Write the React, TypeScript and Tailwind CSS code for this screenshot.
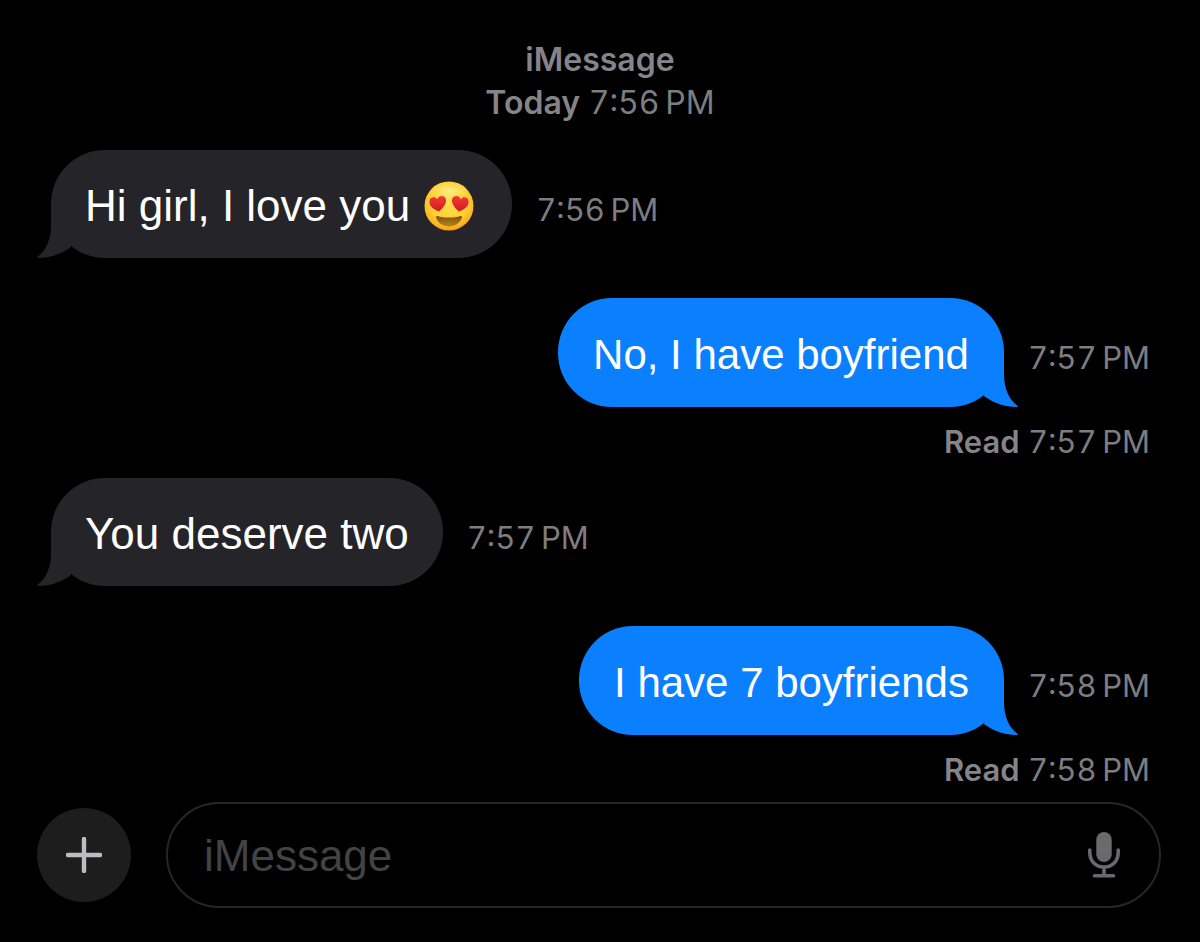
import React from "react";

type Side = "received" | "sent";

interface Message {
  side: Side;
  text: string;
  time: string;
  emoji?: boolean;
  read?: boolean;
}

const messages: Message[] = [
  { side: "received", text: "Hi girl, I love you", time: "7:56\u2009PM", emoji: true },
  { side: "sent", text: "No, I have boyfriend", time: "7:57\u2009PM", read: true },
  { side: "received", text: "You deserve two", time: "7:57\u2009PM" },
  { side: "sent", text: "I have 7 boyfriends", time: "7:58\u2009PM", read: true },
];

function HeartEyes() {
  return (
    <svg
      viewBox="0 0 50 50"
      role="img"
      aria-label="Smiling face with heart eyes"
      className="mr-1 ml-3.5 size-[50px] shrink-0"
    >
      <defs>
        <radialGradient id="face" cx="0.5" cy="0.4" r="0.64">
          <stop offset="0" stopColor="#ffe052" />
          <stop offset="0.6" stopColor="#ffd038" />
          <stop offset="0.85" stopColor="#fdb320" />
          <stop offset="1" stopColor="#ec8a12" />
        </radialGradient>
        <radialGradient id="shine" cx="0.5" cy="0.5" r="0.5">
          <stop offset="0" stopColor="#fff59a" stopOpacity="0.75" />
          <stop offset="1" stopColor="#fff08a" stopOpacity="0" />
        </radialGradient>
        <linearGradient id="heart" x1="0" y1="0" x2="0" y2="1">
          <stop offset="0" stopColor="#f23a38" />
          <stop offset="1" stopColor="#d31a20" />
        </linearGradient>
        <linearGradient id="mouth" x1="0" y1="0" x2="0" y2="1">
          <stop offset="0" stopColor="#80520f" />
          <stop offset="1" stopColor="#b8841c" />
        </linearGradient>
      </defs>
      <circle cx="25" cy="25" r="24.5" fill="url(#face)" />
      <ellipse cx="25" cy="10" rx="20" ry="9" fill="url(#shine)" />
      <path
        d="M15.2 30.4C9.5 28.4 5.2 25 5.4 20.4C5.6 16 11 14.8 13.2 18.3C14.4 14 20.6 13.6 21.9 18C23 22.4 19 27 15.2 30.4Z"
        fill="url(#heart)"
      />
      <path
        d="M34.8 30.4C40.5 28.4 44.8 25 44.6 20.4C44.4 16 39 14.8 36.8 18.3C35.6 14 29.4 13.6 28.1 18C27 22.4 31 27 34.8 30.4Z"
        fill="url(#heart)"
      />
      <path
        d="M13.6 35C16.8 36 20.6 36.5 25 36.5C29.4 36.5 33.2 36 36.4 35C37.8 34.6 38.3 35.5 37.9 36.7C36.3 41.9 31.3 45.4 25 45.4C18.7 45.4 13.7 41.9 12.1 36.7C11.7 35.5 12.2 34.6 13.6 35Z"
        fill="url(#mouth)"
      />
    </svg>
  );
}

function Tail({ side }: { side: Side }) {
  return (
    <svg
      viewBox="0 0 50 60"
      aria-hidden="true"
      className={
        side === "sent"
          ? "absolute bottom-0 -right-3.5 h-[60px] w-[50px] -scale-x-100 text-[#0a80ff]"
          : "absolute bottom-0 -left-3.5 h-[60px] w-[50px] text-[#252429]"
      }
    >
      <path
        d="M14 5V27C14 41 9.5 52 0.6 58.7C-0.2 59.4 0 60 1 60C13 60 24 56 33.5 49.5L40 30V5Z"
        fill="currentColor"
      />
    </svg>
  );
}

function Bubble({ message }: { message: Message }) {
  const sent = message.side === "sent";
  return (
    <li
      className={
        sent ? "mt-10 mb-4 flex flex-col items-end last:mb-3" : "flex flex-col items-start"
      }
    >
      <div className="flex items-baseline gap-6">
        <div
          className={
            sent
              ? "relative rounded-[54px] bg-[#0a80ff] px-[35px] pt-8 pb-[27px] text-[42px]"
              : "relative rounded-[54px] bg-[#252429] px-[34px] pt-[31px] pb-[27px] text-[44px]"
          }
        >
          <Tail side={message.side} />
          <p className="relative flex items-center leading-[50px] whitespace-nowrap text-white">
            {message.text}
            {message.emoji && <HeartEyes />}
          </p>
        </div>
        <time className="font-['Inter'] text-[31px] leading-10 whitespace-nowrap text-[#7d7d81] tabular-nums">
          {message.time}
        </time>
      </div>
      {message.read && (
        <p className="mt-[15px] font-['Inter'] text-[31px] leading-10 whitespace-nowrap text-[#7d7d81] tabular-nums">
          <span className="font-semibold text-[#858589]">Read</span> {message.time}
        </p>
      )}
    </li>
  );
}

export default function App() {
  return (
    <main className="flex min-h-screen flex-col bg-black pt-[38px] font-['Liberation_Sans',sans-serif]">
      <header className="text-center font-['Inter'] text-[32px] leading-[43px] text-[#858589] tabular-nums">
        <h1 className="font-semibold">iMessage</h1>
        <p className="text-[#7d7d81]">
          <span className="font-semibold text-[#858589]">Today</span> 7:56{"\u2009"}PM
        </p>
      </header>

      <ol className="mt-[26px] flex flex-col pr-[50px] pl-[51px]">
        {messages.map((message, index) => (
          <Bubble key={index} message={message} />
        ))}
      </ol>

      <form
        className="flex items-center gap-[35px] pr-[39px] pl-[37px]"
        onSubmit={(event) => event.preventDefault()}
      >
        <button
          type="button"
          aria-label="Add attachment"
          className="flex size-[94px] shrink-0 items-center justify-center rounded-full bg-[#1d1d1e]"
        >
          <svg viewBox="0 0 36 36" aria-hidden="true" className="size-9">
            <path d="M18 2V34M2 18H34" stroke="#bebec0" strokeWidth="4.4" strokeLinecap="round" />
          </svg>
        </button>
        <div className="flex h-[106px] min-w-0 flex-1 items-center rounded-full border-2 border-[#262628] px-9">
          <input
            type="text"
            aria-label="iMessage"
            placeholder="iMessage"
            className="min-w-0 flex-1 bg-transparent pt-0.5 text-[44px] leading-[50px] text-white outline-none placeholder:text-[#434345]"
          />
          <button type="button" aria-label="Dictate" className="shrink-0 pr-0.5">
            <svg viewBox="0 0 34 48" aria-hidden="true" className="h-12 w-[34px]">
              <rect x="9.3" y="1" width="15.4" height="30" rx="7.7" fill="#6a6a6d" />
              <path
                d="M2.8 19V21.5C2.8 30 8.8 36 17 36S31.2 30 31.2 21.5V19M17 36V44.5M7.5 44.8H26.5"
                fill="none"
                stroke="#6a6a6d"
                strokeWidth="3.6"
                strokeLinecap="round"
              />
            </svg>
          </button>
        </div>
      </form>
    </main>
  );
}
